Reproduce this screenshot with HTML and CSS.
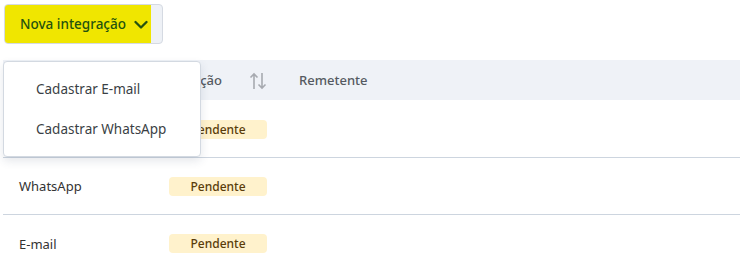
FILE: index.html
```html
<!DOCTYPE html>
<html lang="pt-BR">
<head>
<meta charset="utf-8">
<link rel="stylesheet" href="styles.css">
</head>
<body>
<div class="page">
  <div class="toolbar">
    <div class="split">
      <button class="primary">Nova integração
        <svg class="chev" width="14" height="10" viewBox="0 0 14 10"><path d="M1.5 2 L7 7.5 L12.5 2" fill="none" stroke="currentColor" stroke-width="2.3" stroke-linecap="round" stroke-linejoin="round"/></svg>
      </button>
    </div>
  </div>
  <div class="table">
    <div class="row head">
      <div class="c1">Tipo</div>
      <div class="c2">Situação
        <svg class="sort" width="18" height="20" viewBox="0 0 18 20"><path d="M5 18 V3 M1.5 6.5 L5 3 L8.5 6.5" fill="none" stroke="#a7aab0" stroke-width="1.6"/><path d="M13 2 V17 M9.5 13.5 L13 17 L16.5 13.5" fill="none" stroke="#a7aab0" stroke-width="1.6"/></svg>
      </div>
      <div class="c3">Remetente</div>
    </div>
    <div class="row">
      <div class="c1">E-mail</div>
      <div class="c2"><span class="badge">Pendente</span></div>
      <div class="c3"></div>
    </div>
    <div class="row">
      <div class="c1">WhatsApp</div>
      <div class="c2"><span class="badge">Pendente</span></div>
      <div class="c3"></div>
    </div>
    <div class="row last">
      <div class="c1">E-mail</div>
      <div class="c2"><span class="badge">Pendente</span></div>
      <div class="c3"></div>
    </div>
  </div>
  <div class="menu">
    <div class="item">Cadastrar E-mail</div>
    <div class="item">Cadastrar WhatsApp</div>
  </div>
</div>
</body>
</html>
```

FILE: styles.css
```css
* { box-sizing: border-box; }
html, body { margin: 0; padding: 0; background: #fff; }
body { font-family: "Noto Sans", "Open Sans", sans-serif; color: #333; font-size: 13px; overflow: hidden; }
.page { position: relative; width: 741px; height: 256px; overflow: hidden; }
.toolbar { padding: 4px 0 0 4px; height: 60px; }
.split {
  display: inline-flex; width: 159px; height: 40px;
  border: 1px solid #d5dae2; border-radius: 4px; background: #eef1f6;
  overflow: hidden;
}
.primary {
  display: flex; align-items: center; gap: 8px;
  width: 146px; height: 38px; border: 0; margin: 0;
  background: #f0e600; color: #24520f;
  font-family: inherit; font-size: 13.5px; font-weight: 500;
  padding: 0 0 0 15px;
}
.chev { color: #24520f; margin-top: 1px; }
.table { margin: 0 1px 0 3px; }
.row { display: flex; align-items: center; height: 57px; border-bottom: 1px solid #cdd5df; }
.row.head { height: 41px; background: #eff2f7; border-bottom: 1px solid #ffffff; color: #555a61; font-weight: 500; }
.row.last { border-bottom: 0; }
.c1 { width: 166px; padding-left: 16px; }
.c2 { width: 130px; display: flex; align-items: center; }
.head .c2 { gap: 27px; }
.c3 { flex: 1; }
.sort { margin-top: 1px; }
.badge {
  display: inline-block; width: 98px; height: 19px; line-height: 19px;
  background: #fff2cc; color: #5a3d0a; border-radius: 4px;
  text-align: center; font-size: 12px; font-weight: 500;
}
.menu {
  position: absolute; left: 3px; top: 61px; width: 198px; height: 96px;
  background: #fff; border: 1px solid #d3d9e1; border-radius: 4px;
  box-shadow: 0 4px 10px rgba(40, 60, 90, 0.12);
  padding: 7px 0;
}
.item { height: 40px; line-height: 40px; padding-left: 32px; font-size: 13.5px; color: #3a3f45; }
```
